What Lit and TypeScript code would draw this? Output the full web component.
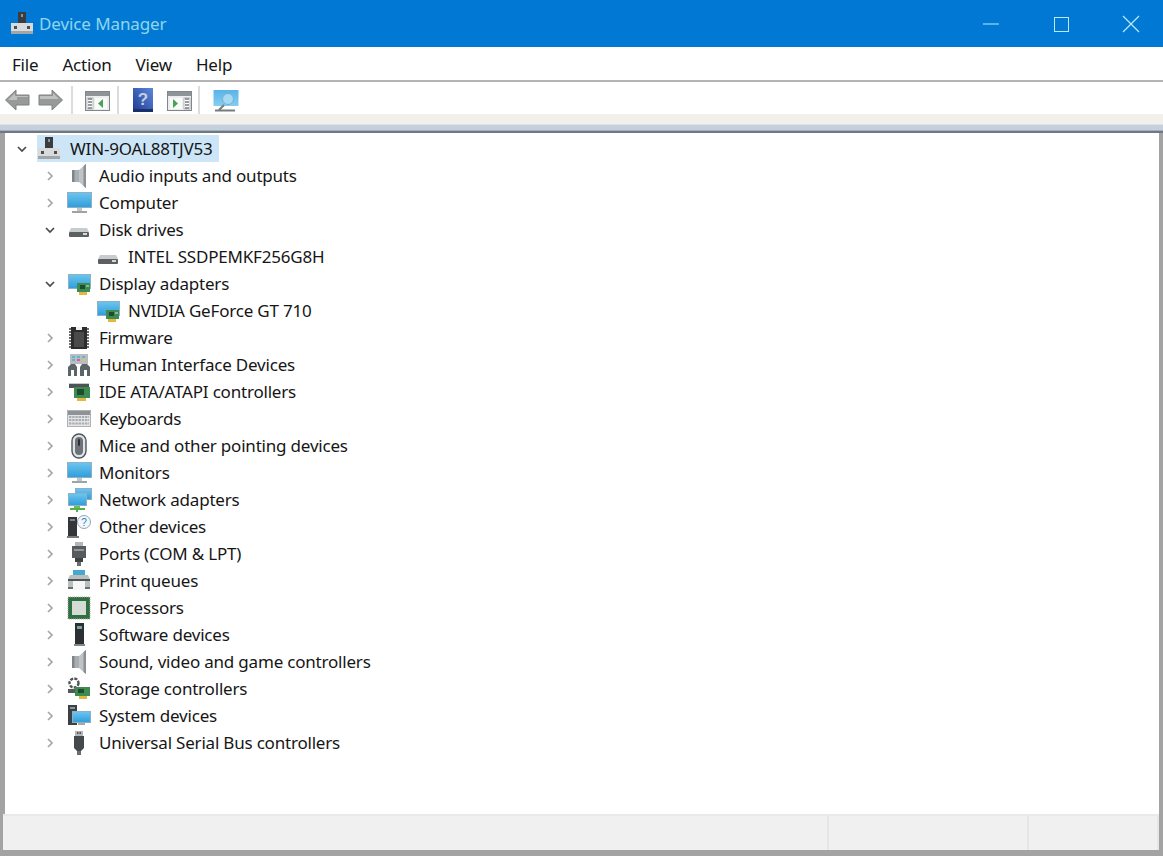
import { LitElement, html, css, svg } from "lit";
import { customElement } from "lit/decorators.js";

const screen = (x: number, y: number, w: number, h: number) => svg`<rect x="${x}" y="${y}" width="${w}" height="${h}" fill="#8fb0c4"/><rect x="${x + 1}" y="${y + 1}" width="${w - 2}" height="${h - 2}" fill="url(#scr)"/>`;
const card = (x: number, y: number) => svg`<rect x="${x}" y="${y}" width="13" height="9" fill="#3d8a52"/><rect x="${x + 3}" y="${y + 2}" width="5" height="4" fill="#1f4c2c"/><rect x="${x + 9}" y="${y + 2}" width="3" height="2" fill="#7fc08a"/><rect x="${x + 2}" y="${y + 9}" width="8" height="3" fill="#e2b83e"/>`;
const speaker = svg`<rect x="5" y="6" width="7" height="12" fill="#a9aeb1"/><rect x="5" y="6" width="2.500" height="12" fill="#7e8487"/><path d="M12 6 19 0v24l-7-6z" fill="#c0c3c5"/><path d="M16.500 2 19 0v24l-2.500-2z" fill="#8b9093"/>`;
const disk = svg`<path d="M4 10h16l2 4H2z" fill="#c9cccd"/><rect x="2" y="14" width="20" height="5" rx="1" fill="#5d6063"/><rect x="16" y="15" width="4" height="2" fill="#d7dadb"/>`;
const adapter = svg`${screen(1, 2, 23, 15)}${card(10, 11)}`;
const monitor = svg`${screen(0, 1, 25, 16)}<rect x="10" y="17" width="5" height="3" fill="#c2c6c8"/><rect x="5" y="20" width="15" height="2" fill="#9ea3a6"/>`;

const ICONS: Record<string, unknown> = {
  root: svg`<rect x="8" y="0" width="8" height="13" fill="#3a3d40"/><rect x="11" y="2" width="2" height="3" fill="#8c9498"/><rect x="1" y="11" width="22" height="11" fill="#d9dadb"/><rect x="1" y="19" width="22" height="3" fill="#a3a6a8"/><rect x="4" y="14" width="3" height="3" fill="#4c4f52"/><rect x="17" y="14" width="3" height="3" fill="#4c4f52"/>`,
  speaker,
  computer: monitor,
  disk,
  adapter,
  firmware: svg`<rect x="4" y="1" width="16" height="22" fill="#2c2c2c"/><path d="M2 3h2M2 6h2M2 9h2M2 12h2M2 15h2M2 18h2M2 21h2M20 3h2M20 6h2M20 9h2M20 12h2M20 15h2M20 18h2M20 21h2" stroke="#6d6d6d" stroke-width="2"/><path d="M9 1h6v3H9z" fill="#efefef"/><path d="M7 6h10v15H7z" fill="#4a4a4a"/>`,
  hid: svg`<rect x="3" y="1" width="18" height="10" fill="#b7bdc2"/><path d="M5 4h3M10 4h3M15 4h3M5 7h3" stroke="#60b7c9" stroke-width="2"/><path d="M10 7h3" stroke="#d95aa0" stroke-width="2"/><path d="M15 7h3" stroke="#e7c14d" stroke-width="2"/><path d="M1 23v-9l3-3h4l2 3v9H7v-6H4v6zM13 23v-9l2-3h5l3 3v9h-3v-6h-3v6z" fill="#5d6468"/>`,
  ide: svg`<rect x="2" y="3" width="20" height="5" fill="#4f5356"/><rect x="2" y="3" width="20" height="1" fill="#c7cacb"/><rect x="7" y="7" width="16" height="11" fill="#3b8b52"/><rect x="10" y="9" width="7" height="6" fill="#1f4c2c"/><rect x="10" y="18" width="9" height="3" fill="#e2b83e"/>`,
  keyboard: svg`<rect x="0" y="3" width="24" height="17" fill="#aeb2b5"/><rect x="1" y="4" width="22" height="4" fill="#8f9397"/><rect x="1" y="8" width="22" height="11" fill="#e3e5e7"/><path d="M2 10h20M2 13h20M2 16.500h20" stroke="#a9adb1" stroke-width="1.800" stroke-dasharray="2.400 .8"/>`,
  mouse: svg`<rect x="5" y="0" width="14" height="24" rx="7" fill="#dfe4e8" stroke="#4f555a" stroke-width="1.400"/><rect x="8" y="3" width="8" height="18" rx="4" fill="#6d7379"/><rect x="11" y="5" width="2" height="7" rx="1" fill="#2e3033"/>`,
  monitor,
  network: svg`${screen(8, 0, 17, 12)}${screen(1, 5, 19, 13)}<rect x="7" y="18" width="6" height="2" fill="#68c25c"/><rect x="3" y="20" width="15" height="2" fill="#56b04b"/><rect x="9" y="22" width="2" height="2" fill="#56b04b"/>`,
  other: svg`<rect x="1" y="2" width="9" height="19" fill="#33373a"/><rect x="3" y="4" width="5" height="2" fill="#7d8589"/><rect x="0" y="21" width="12" height="2" fill="#77797b"/><circle cx="17" cy="7" r="6.500" fill="#f2f7fb" stroke="#95a7b5"/><text x="17" y="10.500" font-size="10" text-anchor="middle" fill="#2e7fb8" font-family="Liberation Sans">?</text>`,
  ports: svg`<rect x="8" y="0" width="8" height="4" fill="#b4b7b9"/><rect x="5" y="4" width="14" height="12" fill="#585b5e"/><rect x="7" y="7" width="10" height="2" fill="#94989b"/><rect x="8" y="16" width="8" height="4" fill="#3f4245"/><rect x="10" y="20" width="4" height="4" fill="#6a6d70"/>`,
  print: svg`<rect x="6" y="1" width="12" height="5" fill="#45a8cf"/><path d="M3 6h18l2 4v8H1v-8z" fill="#b9bec1"/><rect x="1" y="10" width="22" height="2" fill="#4f5356"/><rect x="6" y="12" width="12" height="9" fill="#f6f6f6"/><rect x="1" y="18" width="5" height="2" fill="#6b6f72"/><rect x="18" y="18" width="5" height="2" fill="#6b6f72"/>`,
  cpu: svg`<rect x="1" y="1" width="22" height="22" fill="#2f6f47"/><rect x="1" y="1" width="22" height="22" fill="none" stroke="#b6b28a" stroke-dasharray="1 1" stroke-width="1"/><rect x="5" y="5" width="14" height="14" fill="#d4dcd3"/>`,
  software: svg`<rect x="8" y="0" width="9" height="21" fill="#2b3033"/><rect x="10" y="3" width="5" height="3" fill="#7da2a0"/><rect x="7" y="21" width="11" height="2" fill="#85888a"/>`,
  sound: speaker,
  storage: svg`<circle cx="7" cy="6" r="4.500" fill="none" stroke="#4e5356" stroke-width="2.400" stroke-dasharray="3 1.200"/><rect x="1" y="12" width="10" height="4" fill="#55595c"/><rect x="8" y="10" width="15" height="9" fill="#3b8b52"/><rect x="11" y="12" width="6" height="4" fill="#1f4c2c"/><rect x="12" y="19" width="8" height="3" fill="#e2b83e"/>`,
  system: svg`<rect x="1" y="1" width="9" height="20" fill="#3b4044"/><rect x="3" y="3" width="5" height="2" fill="#8d969b"/>${screen(5, 7, 19, 12)}<rect x="11" y="19" width="7" height="2" fill="#a4a8ab"/>`,
  usb: svg`<rect x="8" y="0" width="8" height="5" fill="#b3b6b8"/><rect x="10" y="1" width="1.500" height="2" fill="#55585a"/><rect x="12.500" y="1" width="1.500" height="2" fill="#55585a"/><path d="M7 5h10v12l-3 3h-4l-3-3z" fill="#46494c"/><rect x="10" y="20" width="4" height="4" fill="#6b6e70"/>`,
};

type Row = { label: string; icon: string; open?: boolean; leaf?: boolean };

const ROWS: Row[] = [
  { label: "Audio inputs and outputs", icon: "speaker" },
  { label: "Computer", icon: "computer" },
  { label: "Disk drives", icon: "disk", open: true },
  { label: "INTEL SSDPEMKF256G8H", icon: "disk", leaf: true },
  { label: "Display adapters", icon: "adapter", open: true },
  { label: "NVIDIA GeForce GT 710", icon: "adapter", leaf: true },
  { label: "Firmware", icon: "firmware" },
  { label: "Human Interface Devices", icon: "hid" },
  { label: "IDE ATA/ATAPI controllers", icon: "ide" },
  { label: "Keyboards", icon: "keyboard" },
  { label: "Mice and other pointing devices", icon: "mouse" },
  { label: "Monitors", icon: "monitor" },
  { label: "Network adapters", icon: "network" },
  { label: "Other devices", icon: "other" },
  { label: "Ports (COM & LPT)", icon: "ports" },
  { label: "Print queues", icon: "print" },
  { label: "Processors", icon: "cpu" },
  { label: "Software devices", icon: "software" },
  { label: "Sound, video and game controllers", icon: "sound" },
  { label: "Storage controllers", icon: "storage" },
  { label: "System devices", icon: "system" },
  { label: "Universal Serial Bus controllers", icon: "usb" },
];

const defs = svg`<defs><linearGradient id="scr" x1="0" y1="0" x2="0" y2="1"><stop offset="0" stop-color="#6cc4ee"/><stop offset="1" stop-color="#2f9fdc"/></linearGradient></defs>`;

const icon = (name: string) => html`<svg class="icon" viewBox="0 0 24 24" overflow="visible" aria-hidden="true">${defs}${ICONS[name]}</svg>`;

const chevron = (open?: boolean) =>
  open
    ? html`<svg class="chev" viewBox="0 0 12 12"><path d="M2 4l4 4 4-4" fill="none" stroke="#4a4a4a" stroke-width="1.700"/></svg>`
    : html`<svg class="chev" viewBox="0 0 12 12"><path d="M4 2l4 4-4 4" fill="none" stroke="#a6a6a6" stroke-width="1.700"/></svg>`;

const arrowBack = html`<svg class="tb arrow" viewBox="0 0 25 22"><path d="M11 1 0.500 11 11 21v-5h13V6H11z" fill="#979a98" stroke="#7f8280"/><path d="M10 4 3 11h9V8h11V7H10z" fill="#bfc1bf"/></svg>`;
const arrowNext = html`<svg class="tb arrow" viewBox="0 0 25 22"><path d="M14 1 24.500 11 14 21v-5H1V6h13z" fill="#979a98" stroke="#7f8280"/><path d="M2 7h13V4l6 6H2z" fill="#bfc1bf"/></svg>`;

const panel = (right: boolean) => html`<svg class="tb pane" viewBox="0 0 25 20">
  <rect x="0.500" y="0.500" width="24" height="19" fill="#eceeee" stroke="#80868a"/>
  <rect x="1" y="1" width="23" height="4" fill="#8f9498"/>
  <rect x="${right ? 17 : 2}" y="7" width="6" height="11" fill="#fff" stroke="#8a9094" stroke-width=".6"/>
  <path d="${right ? "M18 8h4M18 11h4M18 14h4M18 17h4" : "M3 8h4M3 11h4M3 14h4M3 17h4"}" stroke="#777d82" stroke-width="1.400"/>
  <rect x="${right ? 3 : 10}" y="7" width="12" height="11" fill="#f8fbf8"/>
  <path d="${right ? "M6 8l5 4.500-5 4.500z" : "M18 8l-5 4.500 5 4.500z"}" fill="#4aa35a"/>
</svg>`;

@customElement("app-root")
export class AppRoot extends LitElement {
  static styles = css`
    :host {
      display: flex;
      flex-direction: column;
      width: 100%;
      height: 100vh;
      background: #fff;
      font-family: "Noto Sans", "Open Sans", sans-serif;
      color: #161616;
      overflow: hidden;
    }
    .title {
      height: 47px;
      flex: none;
      background: #0078d4;
      display: flex;
      align-items: center;
      padding-left: 10px;
      color: #a8e6f2;
      font-size: 17px;
      letter-spacing: -0.1px;
    }
    .title .icon { margin-right: 5px; }
    .title .text { flex: 1; opacity: 0.85; }
    .wbtn { width: 70px; height: 46px; box-sizing: border-box; padding-left: 6px; display: flex; align-items: center; justify-content: center; }
    .wbtn svg { width: 18px; height: 18px; }
    .menu {
      height: 35px;
      flex: none;
      box-sizing: border-box;
      padding-top: 2px;
      display: flex;
      align-items: center;
      gap: 24px;
      padding-left: 12px;
      font-size: 17px;
      letter-spacing: -0.2px;
      border-bottom: 2px solid #b4b4b4;
    }
    .toolbar {
      height: 32px;
      flex: none;
      box-sizing: border-box;
      padding: 4px 0 0 5px;
      display: flex;
      align-items: center;
    }
    .tb { display: block; flex: none; }
    .arrow { width: 25px; height: 22px; margin-right: 8px; }
    .pane { width: 25px; height: 20px; margin: 1px 0 0; }
    .help { width: 20px; height: 24px; }
    .scan { width: 26px; height: 24px; }
    .sep { width: 2px; height: 28px; background: #dcdcdc; flex: none; }
    .gap-a { width: 12px; flex: none; }
    .gap-b { width: 7px; flex: none; }
    .gap-c { width: 14px; flex: none; }
    .gap-d { width: 6px; flex: none; }
    .gap-e { width: 13px; flex: none; }
    .strip { height: 10px; flex: none; background: #f3f0ec; }
    .cap { height: 9px; flex: none; margin-left: -5px; margin-right: -4px; background: linear-gradient(#dbe3ec 0 1px, #c4d0dc 1px 6px, #a3afba 6px 7px, #6f7982 7px 9px); }
    .body {
      flex: 1;
      display: flex;
      flex-direction: column;
      min-height: 0;
      border-left: 5px solid #a3a3a3;
      border-right: 4px solid #a3a3a3;
    }
    .tree { flex: 1; padding-top: 2px; background: #fff; }
    .row {
      height: 27px;
      display: flex;
      align-items: center;
      font-size: 17px;
      letter-spacing: -0.2px;
      white-space: nowrap;
    }
    .chev { width: 12px; height: 12px; flex: none; margin-left: 39px; margin-right: 11px; }
    .icon { width: 24px; height: 24px; flex: none; display: block; }
    .label { margin-left: 8px; }
    .leaf { width: 91px; flex: none; }
    .root .chev { margin-left: 11px; margin-right: 9px; }
    .sel { display: flex; align-items: center; height: 27px; background: #cde6f7; padding-right: 6px; }
    .sel .label { margin-left: 9px; }
    .status {
      height: 42px;
      flex: none;
      box-sizing: border-box;
      background: #f0f0f0;
      border-top: 2px solid #e9e9e9;
      border-bottom: 6px solid #a3a3a3;
      display: flex;
      margin-left: -2px;
    }
    .status div { border-right: 2px solid #e6e6e6; box-sizing: border-box; }
    .status .a { flex: 1; }
    .status .b { width: 200px; }
    .status .c { width: 130px; }
  `;

  render() {
    return html`
      <div class="title">
        ${icon("root")}
        <span class="text">Device Manager</span>
        <div class="wbtn"><svg viewBox="0 0 18 18"><path d="M1 9h16" stroke="#b8ecf5" stroke-width="1"/></svg></div>
        <div class="wbtn"><svg viewBox="0 0 18 18"><rect x="2.500" y="2.500" width="14" height="14" fill="none" stroke="#b8ecf5"/></svg></div>
        <div class="wbtn"><svg viewBox="0 0 18 18"><path d="M1 1l16 16M17 1 1 17" stroke="#b8ecf5" stroke-width="1.200"/></svg></div>
      </div>
      <div class="menu"><span>File</span><span>Action</span><span>View</span><span>Help</span></div>
      <div class="toolbar">
        ${arrowBack}${arrowNext}
        <div class="sep"></div>
        <span class="gap-a"></span>${panel(false)}<span class="gap-b"></span>
        <div class="sep"></div>
        <span class="gap-c"></span>
        <svg class="tb help" viewBox="0 0 20 24">
          <defs><linearGradient id="bk" x1="0" y1="1" x2="1" y2="0"><stop offset="0" stop-color="#1c3a8e"/><stop offset="1" stop-color="#5c88dc"/></linearGradient></defs>
          <rect width="20" height="24" fill="url(#bk)"/><rect y="21" width="20" height="3" fill="#172f6a"/>
          <text x="10" y="17" font-size="17" font-weight="700" text-anchor="middle" fill="#c5cfe2" font-family="Liberation Sans">?</text>
        </svg>
        <span class="gap-c"></span>${panel(true)}<span class="gap-d"></span>
        <div class="sep"></div>
        <span class="gap-e"></span>
        <svg class="tb scan" viewBox="0 0 26 24">
          <defs><linearGradient id="sc" x1="0" y1="0" x2="0" y2="1"><stop offset="0" stop-color="#58b4e8"/><stop offset="1" stop-color="#86cdf0"/></linearGradient></defs>
          <rect x="0.500" y="2" width="25" height="16" fill="url(#sc)"/><circle cx="15" cy="11" r="5.500" fill="#a7daf2" stroke="#6fb3d6"/>
          <path d="M11 17 6 22M2 22.500h20" stroke="#767c80" stroke-width="2"/>
        </svg>
      </div>
      <div class="strip"></div>
      <div class="body">
        <div class="cap"></div>
        <div class="tree">
          <div class="row root">
            ${chevron(true)}
            <div class="sel">${icon("root")}<span class="label">WIN-9OAL88TJV53</span></div>
          </div>
          ${ROWS.map(
            (r) => html`<div class="row">
              ${r.leaf ? html`<span class="leaf"></span>` : chevron(r.open)}
              ${icon(r.icon)}<span class="label">${r.label}</span>
            </div>`
          )}
        </div>
        <div class="status"><div class="a"></div><div class="b"></div><div class="c"></div></div>
      </div>
    `;
  }
}
